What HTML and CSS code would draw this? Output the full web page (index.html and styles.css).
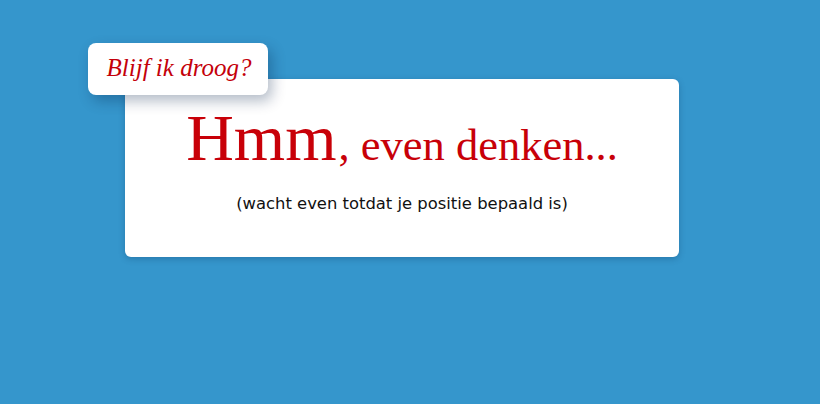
FILE: index.html
```html
<!DOCTYPE html>
<html lang="nl">
<head>
<meta charset="utf-8">
<title>Blijf ik droog?</title>
<link rel="stylesheet" href="styles.css">
</head>
<body>
<main class="stage">
  <section class="card">
    <div class="badge">Blijf ik droog?</div>
    <h1 class="title"><span class="big">Hmm</span>, even denken...</h1>
    <p class="sub">(wacht even totdat je positie bepaald is)</p>
  </section>
</main>
</body>
</html>
```
FILE: styles.css
```css
html, body {
  margin: 0;
  padding: 0;
  height: 100%;
}
body {
  background: #3596cc;
}
.stage {
  padding: 79px 0 0 125px;
}
.card {
  position: relative;
  box-sizing: border-box;
  width: 554px;
  height: 178px;
  background: #fff;
  border-radius: 6px;
  box-shadow: 0 2px 6px rgba(0, 40, 80, 0.25);
  text-align: center;
  padding-top: 29px;
}
.badge {
  position: absolute;
  left: -37px;
  top: -36px;
  box-sizing: border-box;
  width: 180px;
  height: 52px;
  background: #fff;
  border-radius: 8px;
  box-shadow: 4px 6px 14px rgba(0, 30, 70, 0.3);
  font-family: "Liberation Serif", serif;
  font-style: italic;
  font-size: 25px;
  line-height: 50px;
  color: #c4000a;
  text-align: center;
  padding-left: 2px;
}
.title {
  margin: 0;
  font-family: "Liberation Serif", serif;
  font-weight: normal;
  font-size: 44.5px;
  line-height: 60px;
  color: #c80008;
}
.big {
  font-size: 66px;
  margin-right: 2px;
}
.sub {
  margin: 19px 0 0;
  font-family: "DejaVu Sans", sans-serif;
  font-size: 16.4px;
  color: #111;
}
```
